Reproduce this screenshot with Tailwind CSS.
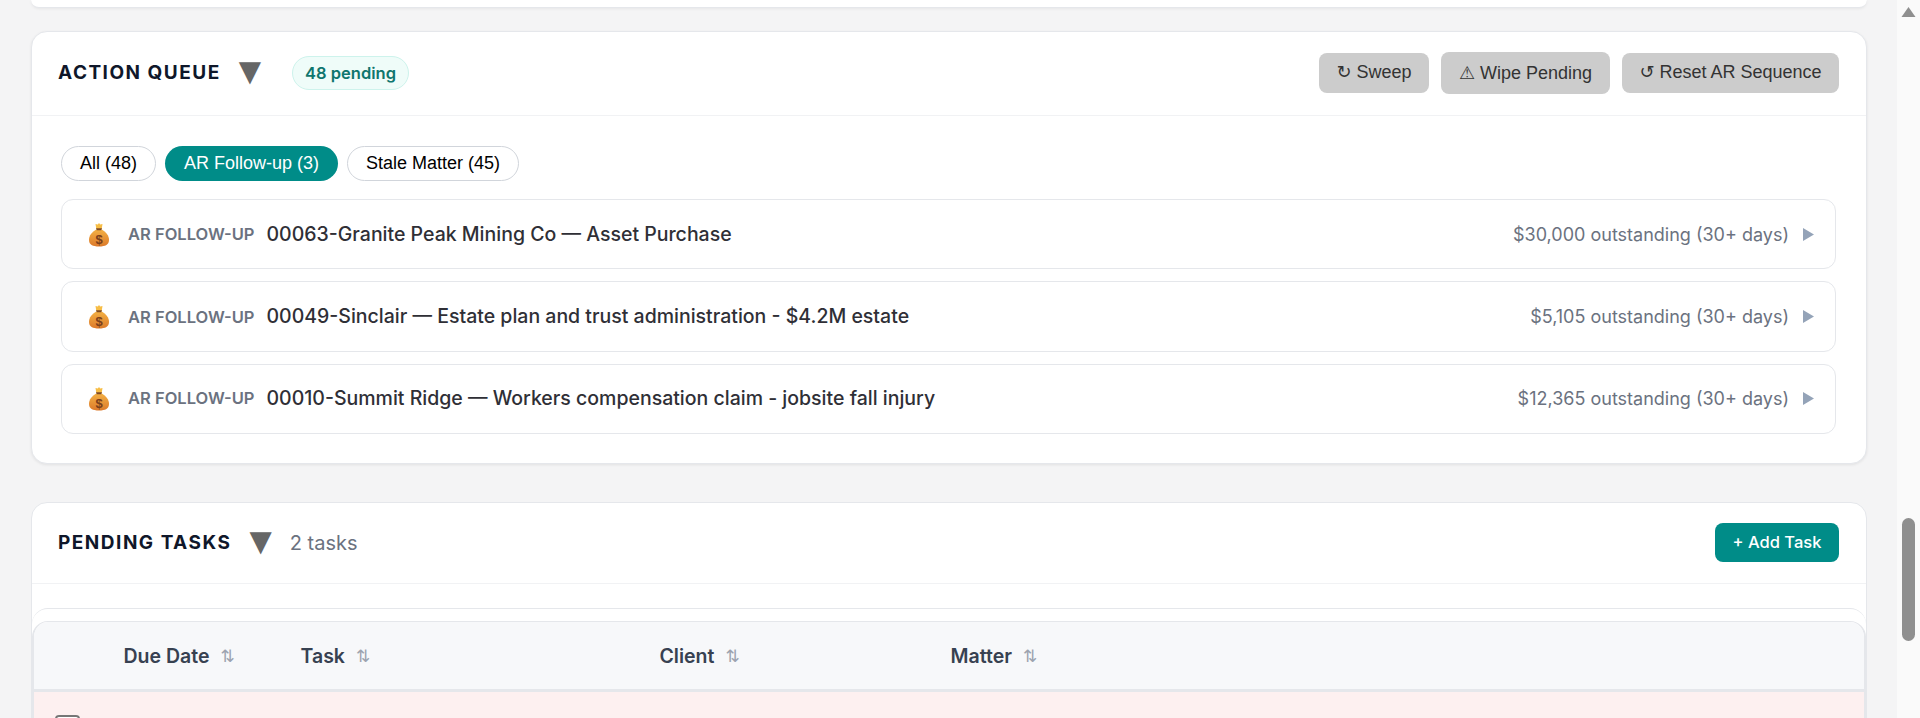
<!DOCTYPE html>
<html>
<head>
<meta charset="utf-8">
<script src="https://cdn.jsdelivr.net/npm/@tailwindcss/browser@4"></script>
</head>
<body class="m-0 h-[718px] overflow-hidden bg-[#f4f4f5] font-['Inter',sans-serif]">
<div class="flex h-[718px]">
  <main class="flex-1 min-w-0 px-[30.5px] overflow-hidden">
    <div class="h-2 bg-white rounded-b-2xl border-b border-[#e5e7eb] shadow-[0_1px_3px_rgba(0,0,0,0.06)]"></div>

    <section class="mt-[22.5px] h-[433px] bg-white rounded-2xl border border-[#e5e7eb] shadow-[0_1px_3px_rgba(0,0,0,0.08)]">
      <header class="h-[84px] flex items-center justify-between pl-[26.5px] pr-[26.5px] border-b border-[#f1f2f4]">
        <div class="flex items-center">
          <h2 class="text-[19px] font-bold tracking-[1.5px] text-[#0f172a]">ACTION QUEUE</h2>
          <span class="ml-[18px] mb-[4px] text-[29px] leading-none text-[#666666] font-['DejaVu_Sans',sans-serif]">▼</span>
          <span class="ml-[31px] h-[34px] px-[12px] flex items-center rounded-full bg-[#effcf9] border border-[#cdf3ec] text-[16.5px] font-semibold text-[#0f766e]">48 pending</span>
        </div>
        <div class="flex items-center gap-3 font-['Liberation_Sans','DejaVu_Sans',sans-serif] text-[18px] text-[#333333]">
          <button class="h-[40px] w-[110px] rounded-lg bg-[#cccccc] -mt-[1px] pb-[1px]">↻ Sweep</button>
          <button class="h-[42px] w-[169px] rounded-lg bg-[#cccccc] pt-[1px]">⚠ Wipe Pending</button>
          <button class="h-[40px] w-[217px] rounded-lg bg-[#cccccc] -mt-[1px] pb-[1px]">↺ Reset AR Sequence</button>
        </div>
      </header>
      <div class="pt-[30px] px-[29.5px]">
        <div class="flex gap-[9px] font-['Liberation_Sans',sans-serif] text-[18px]">
          <button class="h-[35px] w-[95px] rounded-full bg-white border border-[#d1d5db] text-black">All (48)</button>
          <button class="h-[35px] w-[173px] rounded-full bg-[#008c88] text-white">AR Follow-up (3)</button>
          <button class="h-[35px] w-[172px] rounded-full bg-white border border-[#d1d5db] text-black">Stale Matter (45)</button>
        </div>
        <ul class="mt-[18px] flex flex-col gap-[12px]">
          <li class="h-[70px] flex items-center justify-between pl-[26px] pr-[21px] rounded-xl border border-[#e5e7eb] bg-white">
            <div class="flex items-center mt-[2px]">
              <svg class="w-[22px] h-[24px]" viewBox="0 0 22 24"><defs><linearGradient id="bag" x1="0" y1="0" x2="0" y2="1"><stop offset="0" stop-color="#f3b044"/><stop offset="1" stop-color="#dc7a2b"/></linearGradient></defs><path d="M8.300 6.500h5.400C18 9 21 12.500 21 17c0 4.500-3.500 6.500-10 6.500S1 21.500 1 17c0-4.500 3-8 7.300-10.500z" fill="url(#bag)"/><path d="M8 5h6l-.7 2.200H8.700z" fill="#7f4a24"/><path d="M11 0l1.200 1.500 2.300-.5-.7 4.200H8.200L7.500 1l2.300.5z" fill="#f7bd45"/><text x="11" y="20.500" text-anchor="middle" font-size="13" font-weight="700" fill="#7a3f1c" font-family="Liberation Sans">$</text></svg>
              <span class="ml-[18px] text-[16.5px] font-semibold text-[#6b7280]">AR FOLLOW-UP</span>
              <span class="ml-[12px] text-[19.5px] text-[#2f2f36] font-[450]">00063-Granite Peak Mining Co — Asset Purchase</span>
            </div>
            <div class="flex items-center text-[#6b7280] text-[18px] mt-[2px]">
              <span>$30,000 outstanding (30+ days)</span>
              <svg class="ml-[14px] w-[11px] h-[13px]" viewBox="0 0 11 13"><path d="M0 0l11 6.500-11 6.500z" fill="#94a3b8"/></svg>
            </div>
          </li>
          <li class="h-[71px] flex items-center justify-between pl-[26px] pr-[21px] rounded-xl border border-[#e5e7eb] bg-white">
            <div class="flex items-center mt-[2px]">
              <svg class="w-[22px] h-[24px]" viewBox="0 0 22 24"><path d="M8.300 6.500h5.400C18 9 21 12.500 21 17c0 4.500-3.500 6.500-10 6.500S1 21.500 1 17c0-4.500 3-8 7.300-10.500z" fill="url(#bag)"/><path d="M8 5h6l-.7 2.200H8.700z" fill="#7f4a24"/><path d="M11 0l1.200 1.500 2.300-.5-.7 4.200H8.200L7.500 1l2.300.5z" fill="#f7bd45"/><text x="11" y="20.500" text-anchor="middle" font-size="13" font-weight="700" fill="#7a3f1c" font-family="Liberation Sans">$</text></svg>
              <span class="ml-[18px] text-[16.5px] font-semibold text-[#6b7280]">AR FOLLOW-UP</span>
              <span class="ml-[12px] text-[19.5px] text-[#2f2f36] font-[450]">00049-Sinclair — Estate plan and trust administration - $4.2M estate</span>
            </div>
            <div class="flex items-center text-[#6b7280] text-[18px]">
              <span>$5,105 outstanding (30+ days)</span>
              <svg class="ml-[14px] w-[11px] h-[13px]" viewBox="0 0 11 13"><path d="M0 0l11 6.500-11 6.500z" fill="#94a3b8"/></svg>
            </div>
          </li>
          <li class="h-[70px] flex items-center justify-between pl-[26px] pr-[21px] rounded-xl border border-[#e5e7eb] bg-white">
            <div class="flex items-center">
              <svg class="w-[22px] h-[24px]" viewBox="0 0 22 24"><path d="M8.300 6.500h5.400C18 9 21 12.500 21 17c0 4.500-3.500 6.500-10 6.500S1 21.500 1 17c0-4.500 3-8 7.300-10.500z" fill="url(#bag)"/><path d="M8 5h6l-.7 2.200H8.700z" fill="#7f4a24"/><path d="M11 0l1.200 1.500 2.300-.5-.7 4.200H8.200L7.500 1l2.300.5z" fill="#f7bd45"/><text x="11" y="20.500" text-anchor="middle" font-size="13" font-weight="700" fill="#7a3f1c" font-family="Liberation Sans">$</text></svg>
              <span class="ml-[18px] text-[16.5px] font-semibold text-[#6b7280]">AR FOLLOW-UP</span>
              <span class="ml-[12px] text-[19.5px] text-[#2f2f36] font-[450]">00010-Summit Ridge — Workers compensation claim - jobsite fall injury</span>
            </div>
            <div class="flex items-center text-[#6b7280] text-[18px]">
              <span>$12,365 outstanding (30+ days)</span>
              <svg class="ml-[14px] w-[11px] h-[13px]" viewBox="0 0 11 13"><path d="M0 0l11 6.500-11 6.500z" fill="#94a3b8"/></svg>
            </div>
          </li>
        </ul>
      </div>
    </section>

    <section class="mt-[38px] h-[300px] bg-white rounded-t-2xl border border-[#e5e7eb]">
      <header class="h-[81px] flex items-center justify-between pl-[26.5px] pr-[26.5px] border-b border-[#f1f2f4]">
        <div class="flex items-center">
          <h2 class="text-[19px] font-bold tracking-[1.5px] text-[#0f172a] mt-[2px]">PENDING TASKS</h2>
          <span class="ml-[18px] mb-[3px] text-[29px] leading-none text-[#666666] font-['DejaVu_Sans',sans-serif]">▼</span>
          <span class="ml-[18px] text-[20px] text-[#6b7280]">2 tasks</span>
        </div>
        <button class="h-[39px] w-[124px] rounded-lg bg-[#008c88] text-white text-[16.5px] font-medium">+ Add Task</button>
      </header>
      <div class="mt-[24px] h-[200px] rounded-t-2xl border-t border-[#e5e7eb] pt-[12px]">
        <div class="rounded-t-2xl border-t border-x-2 border-[#e5e7eb] h-full overflow-hidden">
          <div class="h-[70px] pt-[3px] bg-[#f7f8fa] border-b-[3px] border-[#e5e7eb] flex items-center text-[19.5px] font-semibold text-[#374151]">
            <div class="pl-[90px] w-[267px] flex items-center gap-[11px]"><span>Due Date</span><span class="text-[17px] font-normal text-[#9ca3af] font-['DejaVu_Sans',sans-serif]">⇅</span></div>
            <div class="w-[359px] flex items-center gap-[11px]"><span>Task</span><span class="text-[17px] font-normal text-[#9ca3af] font-['DejaVu_Sans',sans-serif]">⇅</span></div>
            <div class="w-[291px] flex items-center gap-[11px]"><span>Client</span><span class="text-[17px] font-normal text-[#9ca3af] font-['DejaVu_Sans',sans-serif]">⇅</span></div>
            <div class="flex items-center gap-[11px]"><span>Matter</span><span class="text-[17px] font-normal text-[#9ca3af] font-['DejaVu_Sans',sans-serif]">⇅</span></div>
          </div>
          <div class="h-[100px] bg-[#fdf0f0] pt-[23px] pl-[21px]">
            <div class="w-[25px] h-[25px] rounded-[4px] border-2 border-[#767676] bg-white"></div>
          </div>
        </div>
      </div>
    </section>
  </main>
  <aside class="w-[23px] h-[718px] shrink-0 bg-[#fafafa] relative flex flex-col items-center">
    <svg class="mt-[7px] w-[15px] h-[10px]" viewBox="0 0 15 10"><path d="M7.500 0l7 10H.5z" fill="#8f8f8f"/></svg>
    <div class="absolute left-[5px] top-[518px] w-[13px] h-[123px] rounded-full bg-[#8f8f8f]"></div>
  </aside>
</div>
</body>
</html>
